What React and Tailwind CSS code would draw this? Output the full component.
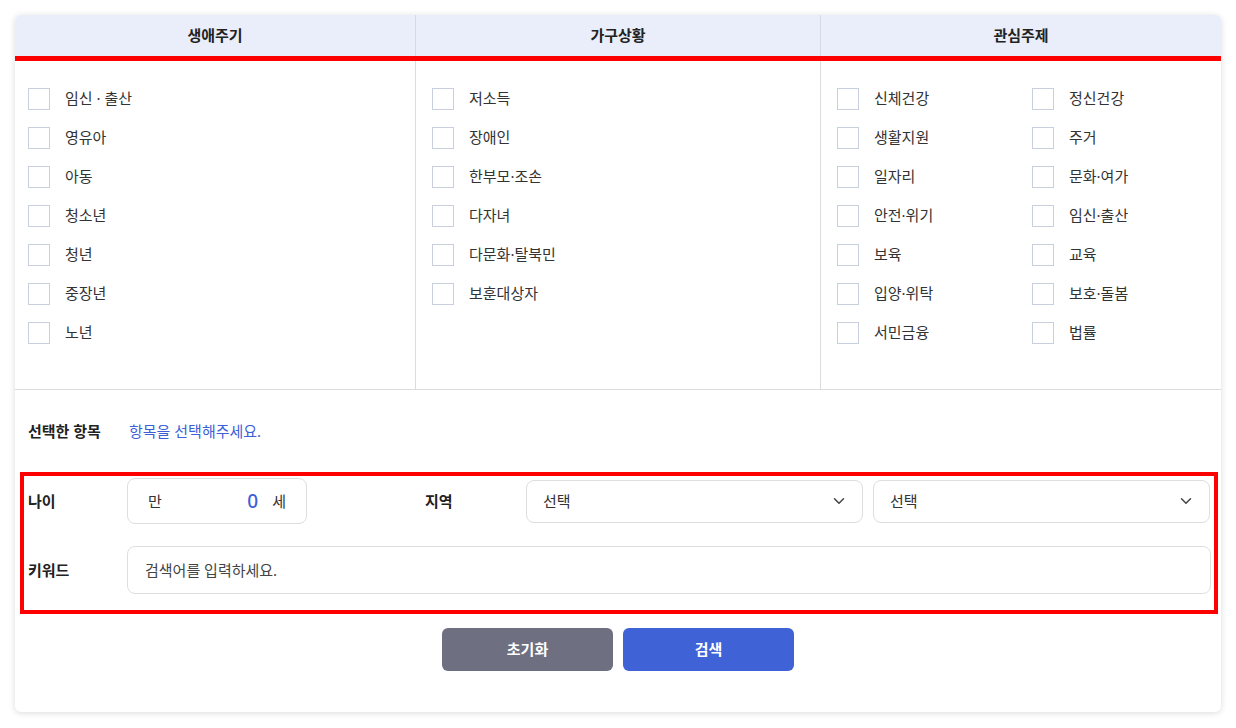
import { ChevronDown } from 'lucide-react';

const lifeCycle = ['임신 · 출산', '영유아', '아동', '청소년', '청년', '중장년', '노년'];
const household = ['저소득', '장애인', '한부모·조손', '다자녀', '다문화·탈북민', '보훈대상자'];
const topicsLeft = ['신체건강', '생활지원', '일자리', '안전·위기', '보육', '입양·위탁', '서민금융'];
const topicsRight = ['정신건강', '주거', '문화·여가', '임신·출산', '교육', '보호·돌봄', '법률'];

const CheckItem = ({ label }) => (
  <label className="flex items-center h-[39px] cursor-pointer">
    <span className="w-[22px] h-[22px] border border-[#c9d0dd] bg-white shrink-0" />
    <span className="ml-[15px] text-[15px] text-[#333]">{label}</span>
  </label>
);

export default function App() {
  return (
    <div
      className="min-h-screen bg-white p-[15px]"
      style={{ fontFamily: '"Noto Sans", "Noto Sans CJK KR", sans-serif' }}
    >
      <div className="bg-white rounded-md shadow-[0_1px_6px_rgba(0,0,0,0.15)] overflow-hidden">
        {/* Header */}
        <div className="grid grid-cols-[401px_405px_1fr] bg-[#e9eefa]">
          <div className="h-[41px] flex items-center justify-center text-[15px] font-bold text-[#222] border-r border-[#d6dae3]">생애주기</div>
          <div className="h-[41px] flex items-center justify-center text-[15px] font-bold text-[#222] border-r border-[#d6dae3]">가구상황</div>
          <div className="h-[41px] flex items-center justify-center text-[15px] font-bold text-[#222]">관심주제</div>
        </div>
        <div className="h-[5px] bg-[#ff0000]" />

        {/* Options */}
        <div className="grid grid-cols-[401px_405px_1fr] h-[329px] border-b border-[#dcdcdc]">
          <div className="pl-[13px] pt-[18px] border-r border-[#dcdcdc]">
            {lifeCycle.map((l) => <CheckItem key={l} label={l} />)}
          </div>
          <div className="pl-[16px] pt-[18px] border-r border-[#dcdcdc]">
            {household.map((l) => <CheckItem key={l} label={l} />)}
          </div>
          <div className="pl-[16px] pt-[18px] grid grid-cols-[195px_1fr]">
            <div>{topicsLeft.map((l) => <CheckItem key={l} label={l} />)}</div>
            <div>{topicsRight.map((l) => <CheckItem key={l} label={l} />)}</div>
          </div>
        </div>

        {/* Selected */}
        <div className="flex items-center h-[82px] pl-[13px] text-[15px]">
          <span className="w-[101px] font-bold text-[#222]">선택한 항목</span>
          <span className="text-[#3e5fd6]">항목을 선택해주세요.</span>
        </div>

        {/* Form */}
        <div className="mx-[5px] mr-[3px] border-4 border-[#ff0000] pl-[4px] pt-[2px] pb-[16px]">
          <div className="flex items-center">
            <span className="w-[99px] text-[15px] font-bold text-[#222]">나이</span>
            <div className="w-[180px] h-[46px] border border-[#dedede] rounded-lg flex items-center px-[20px] text-[15px] text-[#333]">
              <span>만</span>
              <span className="ml-auto mr-[14px] text-[19px] font-medium text-[#3e5fd6]">0</span>
              <span>세</span>
            </div>
            <span className="ml-[118px] w-[101px] text-[15px] font-bold text-[#222]">지역</span>
            <div className="w-[337px] h-[43px] border border-[#dedede] rounded-lg flex items-center justify-between pl-[16px] pr-[14px] text-[15px] text-[#333]">
              <span>선택</span>
              <ChevronDown size={18} strokeWidth={2} className="text-[#444]" />
            </div>
            <div className="ml-[10px] w-[337px] h-[43px] border border-[#dedede] rounded-lg flex items-center justify-between pl-[16px] pr-[14px] text-[15px] text-[#333]">
              <span>선택</span>
              <ChevronDown size={18} strokeWidth={2} className="text-[#444]" />
            </div>
          </div>
          <div className="flex items-center mt-[22px]">
            <span className="w-[99px] text-[15px] font-bold text-[#222]">키워드</span>
            <div className="w-[1084px] h-[48px] border border-[#dedede] rounded-lg flex items-center px-[17px] text-[15px] text-[#444]">
              검색어를 입력하세요.
            </div>
          </div>
        </div>

        {/* Buttons */}
        <div className="flex justify-center gap-[10px] pt-[14px] pb-[41px]">
          <button className="w-[171px] h-[43px] rounded-md bg-[#6e7082] text-white text-[15px] font-bold">초기화</button>
          <button className="w-[171px] h-[43px] rounded-md bg-[#3f62d7] text-white text-[15px] font-bold">검색</button>
        </div>
      </div>
    </div>
  );
}
